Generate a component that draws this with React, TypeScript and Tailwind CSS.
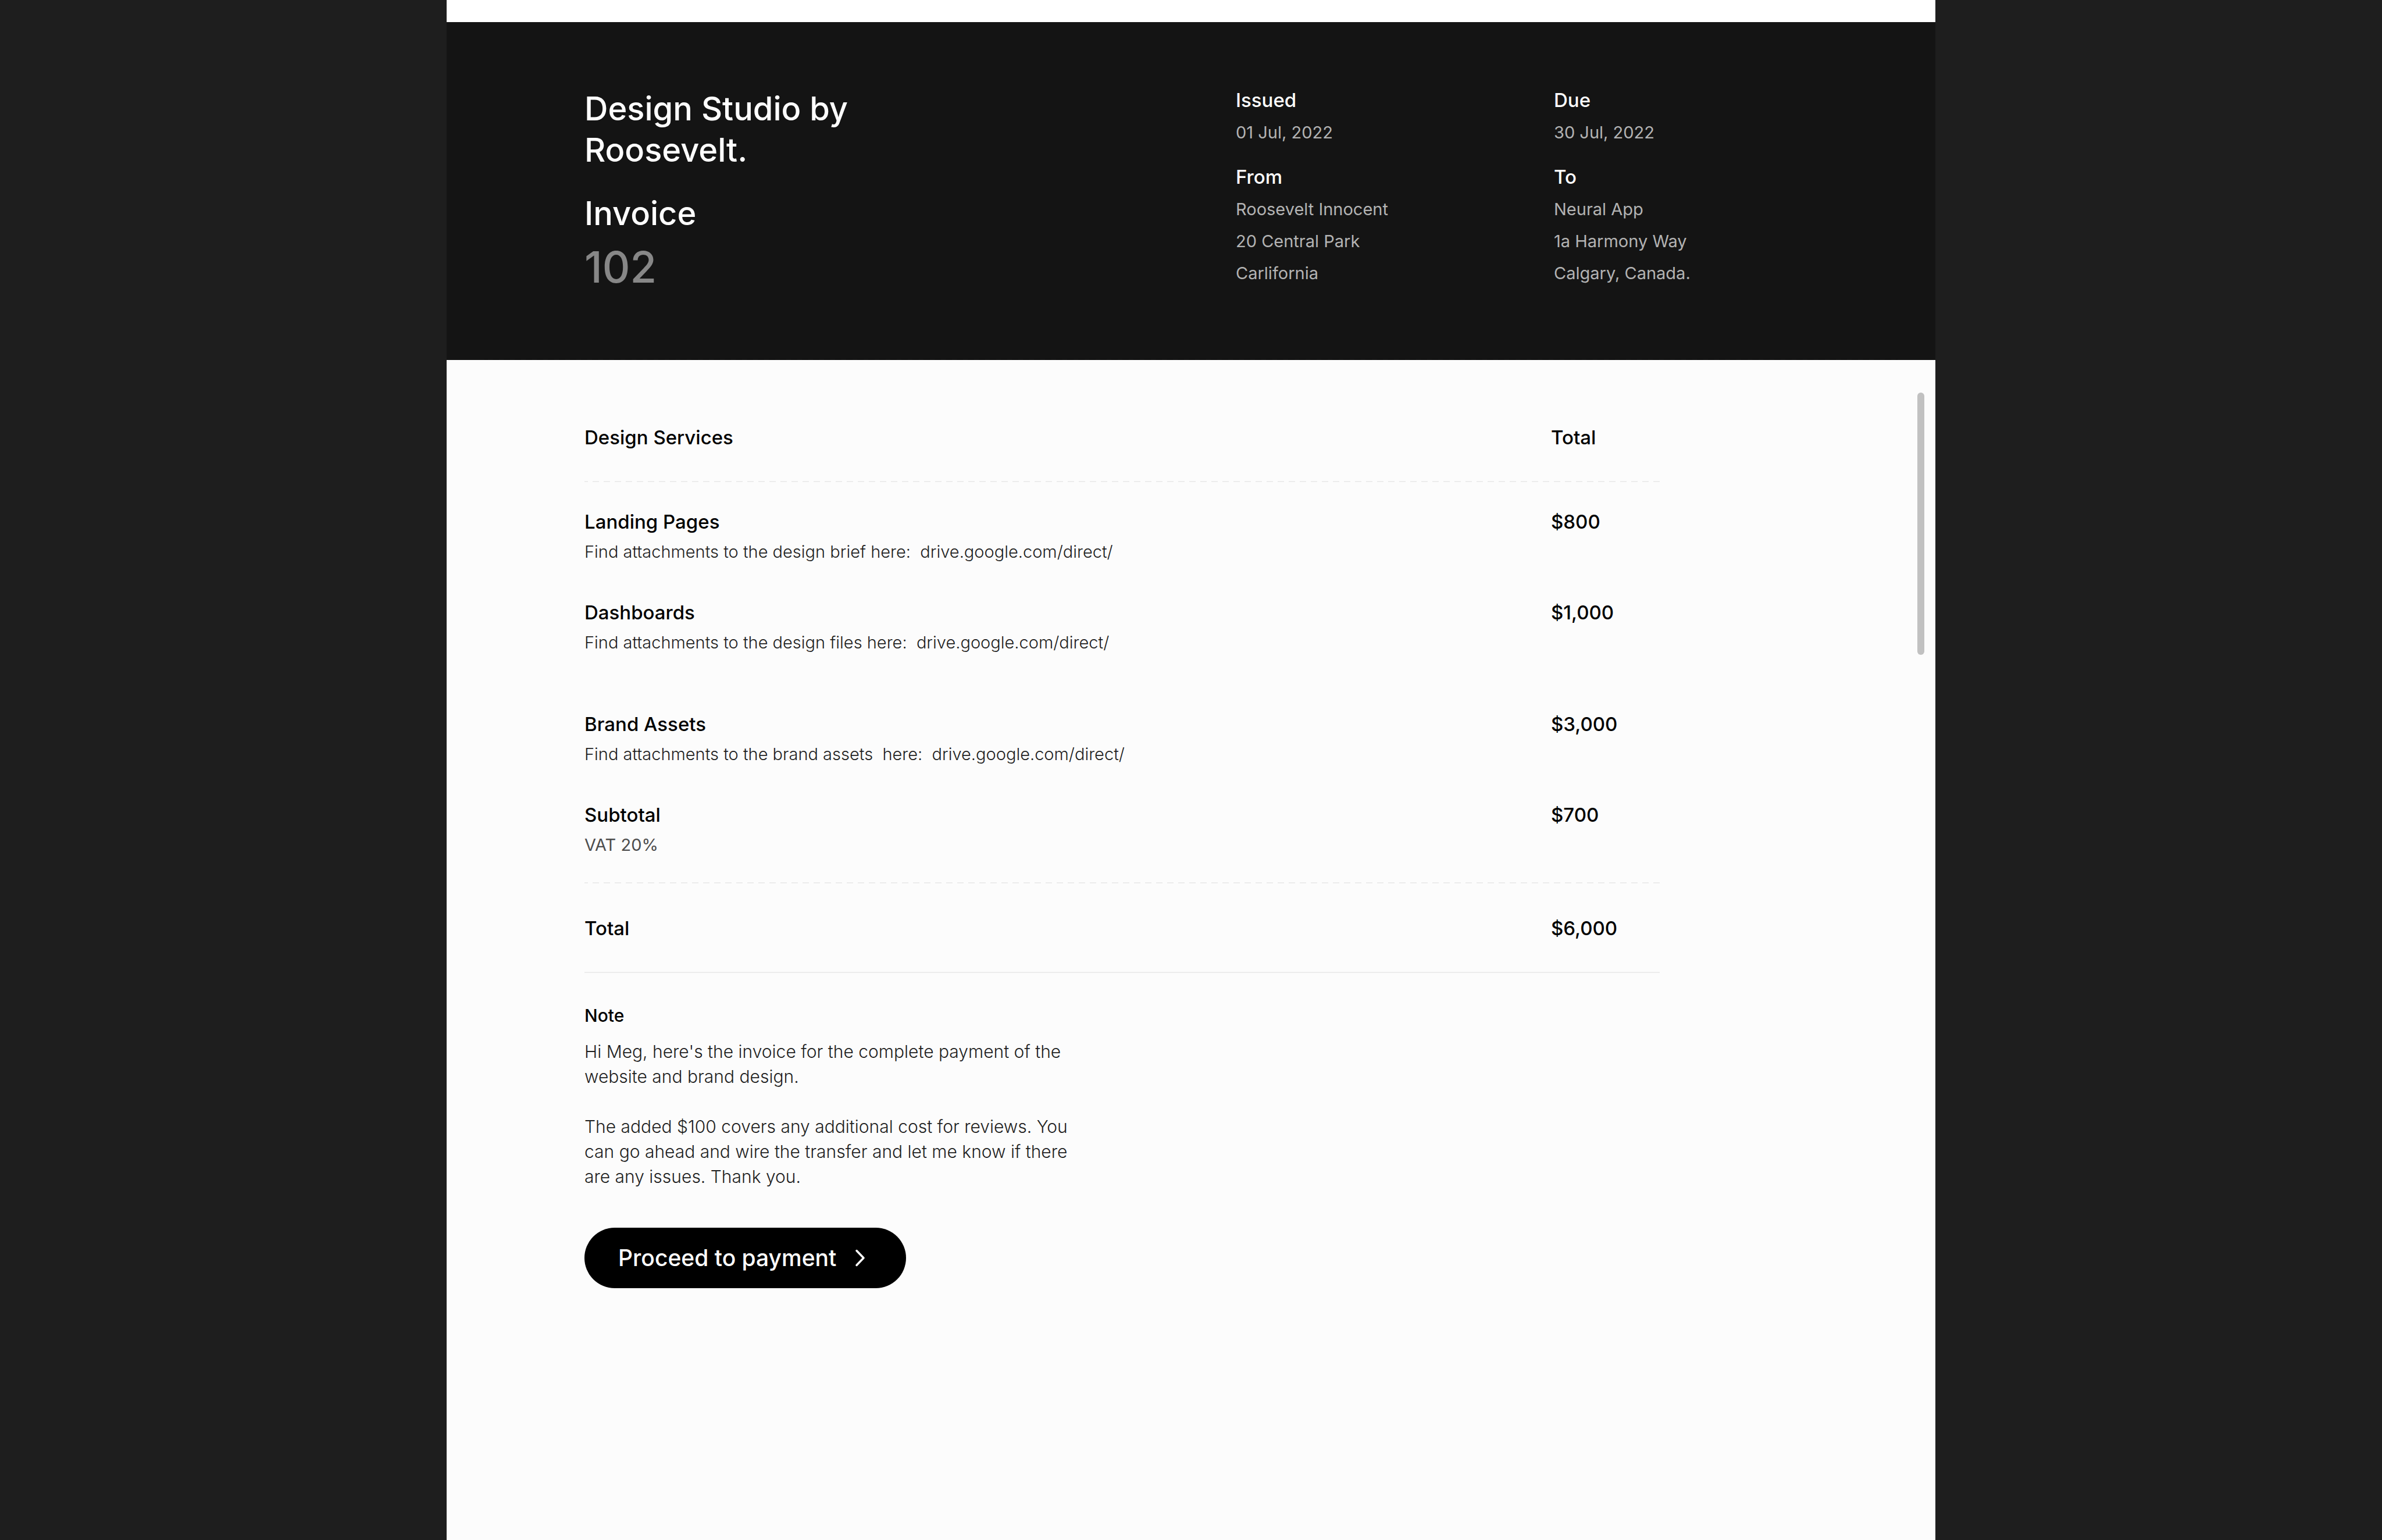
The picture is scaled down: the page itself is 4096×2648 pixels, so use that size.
import React from "react";

const services = [
  { name: "Landing Pages", brief: "Find attachments to the design brief here:", link: true, price: "$800", gap: "pt-12" },
  { name: "Dashboards", brief: "Find attachments to the design files here:", link: true, price: "$1,000", gap: "pt-[66px]" },
  { name: "Brand Assets", brief: "Find attachments to the brand assets\u00a0 here:", link: true, price: "$3,000", gap: "pt-[102px]" },
  { name: "Subtotal", brief: "VAT 20%", link: false, price: "$700", gap: "pt-[66px]" },
];

function Meta({ title, lines }: { title: string; lines: string[] }) {
  return (
    <div>
      <h3 className="mb-2 text-[33px] leading-10 font-medium text-white">{title}</h3>
      {lines.map((line) => (
        <p key={line} className="text-[29px] leading-[55px] text-[#b3b3b3]">
          {line}
        </p>
      ))}
    </div>
  );
}

function DashedRow() {
  return (
    <tr aria-hidden="true">
      <td
        colSpan={2}
        className="h-0.5 p-0 bg-[repeating-linear-gradient(90deg,#ececec_0_6px,transparent_6px_14px,#ececec_14px_19px)]"
      />
    </tr>
  );
}

export default function App() {
  return (
    <div className="min-h-screen bg-[#1e1e1e] font-['Inter',sans-serif]">
      <main className="mx-auto flex min-h-screen w-5/8 flex-col bg-white pt-[38px]">
        <header className="bg-[#141414] pt-[114px]">
          <div className="grid grid-cols-[1120fr_547fr_419fr] px-[237px] pb-28">
            <div>
              <h1 className="w-[500px] text-[56px] leading-[71px] font-medium text-white">Design Studio by Roosevelt.</h1>
              <h2 className="mt-[38px] text-[56px] leading-[71px] font-medium text-white">Invoice</h2>
              <p className="mt-2.5 text-[74px] leading-[92px] font-medium text-[#878787]">102</p>
            </div>
            <div className="flex flex-col gap-[29px]">
              <Meta title="Issued" lines={["01 Jul, 2022"]} />
              <Meta title="From" lines={["Roosevelt Innocent", "20 Central Park", "Carlifornia"]} />
            </div>
            <div className="flex flex-col gap-[29px]">
              <Meta title="Due" lines={["30 Jul, 2022"]} />
              <Meta title="To" lines={["Neural App", "1a Harmony Way", "Calgary, Canada."]} />
            </div>
          </div>
          <div className="mx-[65px] h-0.5 bg-[repeating-linear-gradient(90deg,#111111_0_6px,transparent_6px_14px,#111111_14px_19px)]" />
        </header>

        <section className="relative flex-1 bg-[#fcfcfc] pt-[113px] pr-[474px] pb-20 pl-[237px] text-black">
          <table className="w-full table-fixed border-collapse text-left align-top">
            <colgroup>
              <col />
              <col className="w-[187px]" />
            </colgroup>
            <thead>
              <tr className="text-[33px] leading-10">
                <th className="pb-[55px] font-medium">Design Services</th>
                <th className="pb-[55px] font-medium">Total</th>
              </tr>
            </thead>
            <tbody>
              <DashedRow />
              {services.map((item) => (
                <tr key={item.name} className="align-top">
                  <td className={item.gap}>
                    <p className="text-[33px] leading-10 font-medium">{item.name}</p>
                    {item.link ? (
                      <p className="mt-3.5 text-[29px] leading-9 font-light text-[#1f1f1f]">
                        {item.brief}
                        {"\u00a0 "}
                        <a href="https://drive.google.com/direct/">drive.google.com/direct/</a>
                      </p>
                    ) : (
                      <p className="mt-3.5 text-[29px] leading-9 text-[#4d4d4d]">{item.brief}</p>
                    )}
                  </td>
                  <td className={item.gap}>
                    <p className="text-[33px] leading-10 font-medium">{item.price}</p>
                  </td>
                </tr>
              ))}
              <tr aria-hidden="true">
                <td colSpan={2} className="h-[46px] p-0" />
              </tr>
              <DashedRow />
            </tbody>
            <tfoot>
              <tr className="border-b-2 border-[#ececec] text-[33px] leading-10">
                <th className="pt-[57px] pb-[55px] font-medium">Total</th>
                <td className="pt-[57px] pb-[55px] font-medium">$6,000</td>
              </tr>
            </tfoot>
          </table>

          <h3 className="mt-[55px] text-[30px] leading-9 font-medium">Note</h3>
          <div className="mt-[23px] w-[864px] space-y-[43px] text-[30px] leading-[43px] font-light text-[#1f1f1f]">
            <p>Hi Meg, here's the invoice for the complete payment of the website and brand design.</p>
            <p>
              The added $100 covers any additional cost for reviews. You can go ahead and wire the transfer and let me
              know if there are any issues. Thank you.
            </p>
          </div>

          <button
            type="button"
            className="mt-[66px] flex h-[104px] items-center gap-8 rounded-full bg-black pr-[70px] pl-[58px] text-[39px] font-medium text-white"
          >
            Proceed to payment
            <svg width="18" height="30" viewBox="0 0 18 30" fill="none" aria-hidden="true">
              <path d="M3 2.5L15 15L3 27.5" stroke="currentColor" strokeWidth="3.5" strokeLinecap="round" strokeLinejoin="round" />
            </svg>
          </button>

          <div className="absolute top-14 right-[19px] h-[451px] w-3 rounded-full bg-[#c1c1c1]" />
        </section>
      </main>
    </div>
  );
}
